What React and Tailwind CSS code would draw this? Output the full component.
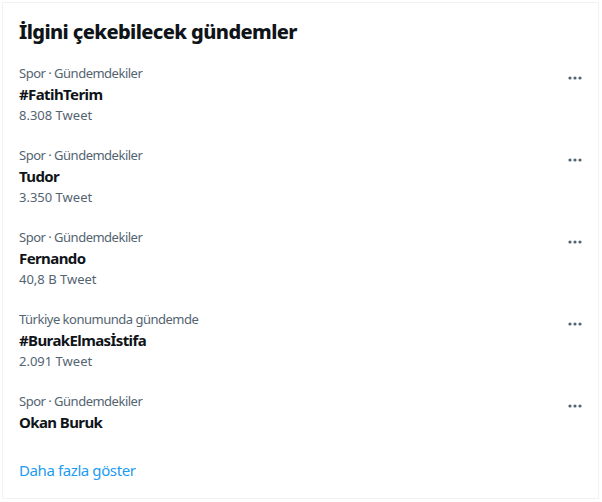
import React from "react";

const trends = [
  { meta: "Spor · Gündemdekiler", name: "#FatihTerim", count: "8.308 Tweet" },
  { meta: "Spor · Gündemdekiler", name: "Tudor", count: "3.350 Tweet" },
  { meta: "Spor · Gündemdekiler", name: "Fernando", count: "40,8 B Tweet" },
  { meta: "Türkiye konumunda gündemde", name: "#BurakElmasİstifa", count: "2.091 Tweet" },
  { meta: "Spor · Gündemdekiler", name: "Okan Buruk", count: null },
];

function Dots() {
  return (
    <svg width="16" height="16" viewBox="0 0 16 16" className="mt-[7px] shrink-0">
      <circle cx="3" cy="8" r="1.6" fill="#536471" />
      <circle cx="8" cy="8" r="1.6" fill="#536471" />
      <circle cx="13" cy="8" r="1.6" fill="#536471" />
    </svg>
  );
}

export default function App() {
  return (
    <div className="w-[602px] h-[502px] bg-white p-[2px] pr-[3px] pb-[3px] font-['Noto_Sans',sans-serif]">
      <div className="h-full border border-[#eff3f4] flex flex-col">
        <div className="pl-[16px] pt-[15px] pb-[7px] text-[20px] leading-[28px] font-extrabold tracking-[-0.6px] text-[#0f1419]">
          İlgini çekebilecek gündemler
        </div>
        {trends.map((t, i) => (
          <div key={i} className="flex justify-between items-start pl-[16px] pr-[15px] pt-[10px] pb-[9px]">
            <div className="flex flex-col">
              <div className="text-[13px] leading-[21px] tracking-[-0.5px] text-[#536471]">{t.meta}</div>
              <div className="text-[15px] leading-[21px] font-bold tracking-[-0.6px] text-[#0f1419]">{t.name}</div>
              {t.count && (
                <div className="text-[13px] leading-[21px] text-[#536471]">{t.count}</div>
              )}
            </div>
            <Dots />
          </div>
        ))}
        <div className="pl-[16px] py-[16px] text-[15px] leading-[24px] tracking-[-0.4px] text-[#1d9bf0]">
          Daha fazla göster
        </div>
      </div>
    </div>
  );
}
